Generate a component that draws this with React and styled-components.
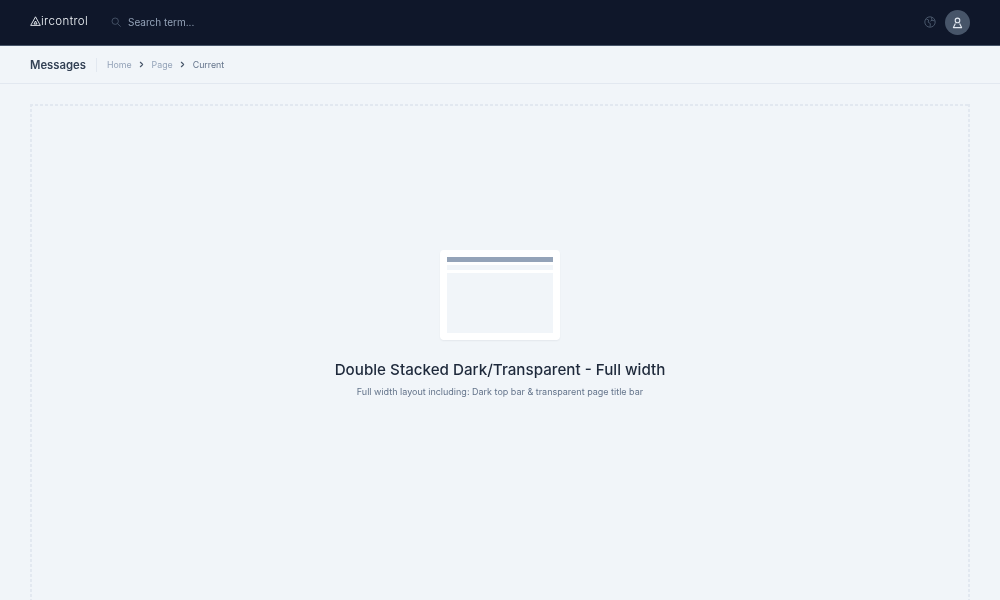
import React from 'react';
import styled, { createGlobalStyle } from 'styled-components';
import { ChevronRight } from 'lucide-react';

const GlobalStyle = createGlobalStyle`
    html, body {
        margin: 0;
        padding: 0;
        height: 100%;
        background: #f1f5f9;
    }
    #root {
        height: 100%;
    }
    * {
        box-sizing: border-box;
    }
`

const Page = styled.div`
    height: 600px;
    overflow: hidden;
    display: flex;
    flex-direction: column;
    font-family: Inter, "Liberation Sans", sans-serif;
    will-change: transform;
`

const TopBar = styled.header`
    height: 46px;
    flex: none;
    display: flex;
    align-items: center;
    padding: 0 30px;
    background: #0f172a;
    border-bottom: 1px solid #475569;
`

const Logo = styled.a`
    width: 58px;
    display: flex;
    align-items: center;
    color: #f1f5f9;
    font-size: 11.5px;
    font-weight: 300;
    letter-spacing: 0.4px;
    margin-top: -4px;
    svg {
        flex: none;
        display: block;
    }
`

const Search = styled.div`
    display: flex;
    align-items: center;
    gap: 7px;
    margin-left: 23px;
    margin-top: -1px;
    color: #94a3b8;
    font-size: 10px;
    svg {
        color: #475569;
    }
`

const RightTools = styled.div`
    display: flex;
    align-items: center;
    gap: 9px;
    margin-left: auto;
`

const ToolIcon = styled.div`
    width: 12px;
    height: 12px;
    margin-top: -1px;
    color: #475569;
    display: flex;
`

const Avatar = styled.div`
    width: 25px;
    height: 25px;
    border-radius: 50%;
    background: #475569;
    color: #e2e8f0;
    display: flex;
    align-items: center;
    justify-content: center;
`

const TitleBar = styled.div`
    height: 38px;
    flex: none;
    display: flex;
    align-items: center;
    padding: 0 30px;
    border-bottom: 1px solid #e2e8f0;
`

const PageTitle = styled.h1`
    margin: 0;
    padding-right: 10px;
    border-right: 1px solid #e2e8f0;
    font-size: 11.3px;
    line-height: 14px;
    font-weight: 600;
    color: #334155;
`

const Crumbs = styled.nav`
    display: flex;
    align-items: center;
    margin-left: 10px;
    font-size: 8.8px;
    color: #94a3b8;
`

const Crumb = styled.span`
    color: ${props => (props.$current ? '#64748b' : '#94a3b8')};
`

const CrumbSep = styled.span`
    display: flex;
    width: 20px;
    justify-content: center;
    color: #475569;
`

const Main = styled.main`
    flex: 1;
    padding: 20px 30px 0;
`

// dots repeat every 5px, a plain dotted border can only give 4px or 6px here
const DashedArea = styled.section`
    height: 100%;
    min-height: 520px;
    background-image:
        linear-gradient(to right, #e2e8f0 3px, transparent 3px),
        linear-gradient(to bottom, #e2e8f0 3px, transparent 3px),
        linear-gradient(to bottom, #e2e8f0 3px, transparent 3px);
    background-size: 5px 2px, 2px 5px, 2px 5px;
    background-position: left top, left top, right top;
    background-repeat: repeat-x, repeat-y, repeat-y;
    display: flex;
    flex-direction: column;
    align-items: center;
    padding-top: 146px;
`

const Preview = styled.div`
    width: 120px;
    height: 90px;
    padding: 7px;
    border-radius: 4px;
    background: #fff;
    box-shadow: 0 1px 2px rgba(15, 23, 42, 0.06);
    display: flex;
    flex-direction: column;
    gap: 3px;
`

const PreviewBar = styled.div`
    height: ${props => props.$h}px;
    flex: none;
    background: ${props => props.$color};
`

const PreviewBody = styled.div`
    flex: 1;
    background: #f1f5f9;
`

const Heading = styled.h2`
    margin: 20px 0 0;
    font-size: 15.2px;
    line-height: 20px;
    font-weight: 500;
    color: #1e293b;
`

const Subtext = styled.p`
    margin: 5px 0 0;
    font-size: 9px;
    line-height: 14px;
    color: #64748b;
`

const SearchIcon = () => (
    <svg width="10" height="10" viewBox="0 0 10 10" fill="none" stroke="currentColor" strokeWidth="0.9">
        <circle cx="4.2" cy="4.2" r="3.2" />
        <path d="M6.7 6.7 L9.4 9.4" strokeLinecap="round" />
    </svg>
)

const LogoMark = () => (
    <svg width="11" height="10" viewBox="0 0 11 10" fill="none" stroke="currentColor" strokeWidth="0.9">
        <path d="M5.5 0.8 L0.7 9.4 H10.3 Z" strokeLinejoin="round" />
        <path d="M5.5 5 L4 8 H7 Z" strokeLinejoin="round" />
    </svg>
)

const GlobeIcon = () => (
    <svg width="12" height="12" viewBox="0 0 12 12" fill="none" stroke="currentColor" strokeWidth="1">
        <circle cx="6" cy="6" r="5.2" />
        <path d="M2 2.8 L4.6 4 L4.2 6.2 L6.4 7.6 L6 10.8 M10.8 5 L8 4.2 L7.4 1.2 M8 4.2 L6.4 5.2" />
    </svg>
)

const UserIcon = () => (
    <svg width="11" height="12" viewBox="0 0 11 12" fill="none" stroke="currentColor" strokeWidth="1.1">
        <circle cx="5.5" cy="3.4" r="2.3" />
        <path d="M3.4 6.6 L1.4 10.6 H9.6 L7.6 6.6" strokeLinejoin="round" />
    </svg>
)

export default function App() {
    return (
        <Page>
            <GlobalStyle />
            <TopBar>
                <Logo>
                    <LogoMark />
                    ircontrol
                </Logo>
                <Search>
                    <SearchIcon />
                    Search term...
                </Search>
                <RightTools>
                    <ToolIcon><GlobeIcon /></ToolIcon>
                    <Avatar><UserIcon /></Avatar>
                </RightTools>
            </TopBar>
            <TitleBar>
                <PageTitle>Messages</PageTitle>
                <Crumbs>
                    <Crumb>Home</Crumb>
                    <CrumbSep><ChevronRight size={9} strokeWidth={3} /></CrumbSep>
                    <Crumb>Page</Crumb>
                    <CrumbSep><ChevronRight size={9} strokeWidth={3} /></CrumbSep>
                    <Crumb $current>Current</Crumb>
                </Crumbs>
            </TitleBar>
            <Main>
                <DashedArea>
                    <Preview>
                        <PreviewBar $h={5} $color="#94a3b8" />
                        <PreviewBar $h={5} $color="#f1f5f9" />
                        <PreviewBody />
                    </Preview>
                    <Heading>Double Stacked Dark/Transparent - Full width</Heading>
                    <Subtext>Full width layout including: Dark top bar &amp; transparent page title bar</Subtext>
                </DashedArea>
            </Main>
        </Page>
    );
}
